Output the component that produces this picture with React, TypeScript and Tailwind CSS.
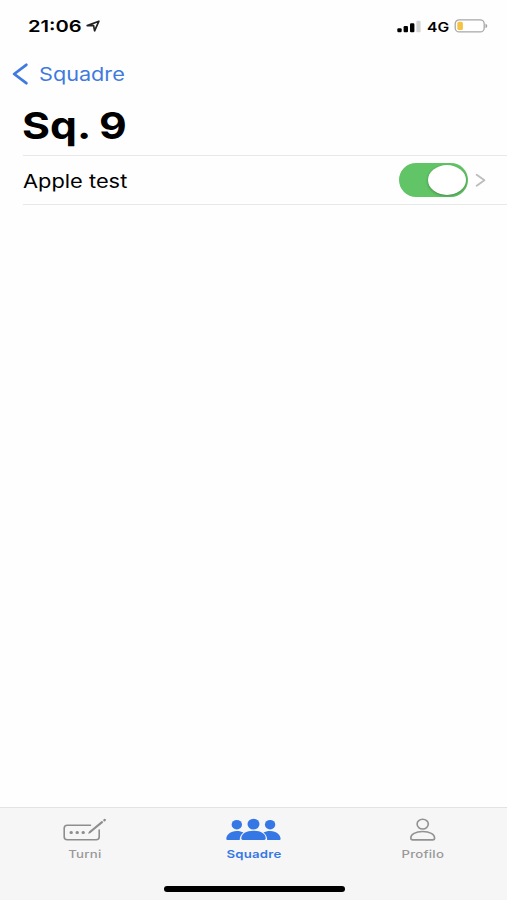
import React from "react";

function StatusBar() {
  return (
    <div className="flex h-[52px] items-center justify-between pl-[28px] pr-[19px]">
      <div className="flex items-center">
        <span className="block w-[58px] origin-left scale-x-[1.22] whitespace-nowrap text-[16.5px] font-semibold leading-5">
          21:06
        </span>
        <svg className="h-[12px] w-[14px]" viewBox="0 0 14 12" fill="none" stroke="#222" strokeWidth="1.7" strokeLinejoin="round">
          <path d="M1.2 5.6 12.9 1.2 8.6 10.8 7.6 5.7Z" />
        </svg>
      </div>
      <div className="flex items-center">
        <svg className="h-[13px] w-[24px]" viewBox="0 0 24 13" fill="#000">
          <rect x="0.3" y="8.3" width="4.4" height="4" rx="1.2" />
          <rect x="6.6" y="6.1" width="4.4" height="6.2" rx="1.1" />
          <rect x="13" y="3.3" width="4.4" height="9" rx="1.1" />
          <rect x="19.4" y="0.8" width="4.2" height="11.5" rx="1.1" fill="#d3d3d3" />
        </svg>
        <span className="ml-[6px] mt-px block w-[27px] origin-left scale-x-[1.16] whitespace-nowrap text-[13.5px] font-semibold leading-4">
          4G
        </span>
        <svg className="h-[14px] w-[34px]" viewBox="0 0 34 14">
          <rect x="1.2" y="0.9" width="29" height="12" rx="4" fill="#fff" stroke="#a7a7a7" strokeWidth="1.3" />
          <rect x="3.3" y="2.8" width="5.6" height="8.2" rx="1.6" fill="#f5c344" />
          <path d="M31.5 4.7c2.3.7 2.3 3.7 0 4.5Z" fill="#a0a0a0" />
        </svg>
      </div>
    </div>
  );
}

function Toggle() {
  return (
    <div className="flex h-[34px] w-[69px] items-center justify-end rounded-full bg-[#61c466] pr-[2px]">
      <div className="h-[30px] w-[38px] rounded-[50%] bg-white shadow-[0_1px_3px_rgba(0,0,0,0.3)]" />
    </div>
  );
}

function TabItem({ label, active, children }: { label: string; active?: boolean; children: React.ReactNode }) {
  return (
    <div className={`flex flex-1 flex-col items-center ${active ? "text-[#3577e5]" : "text-[#999999]"}`}>
      {children}
      <span className={`mt-[3px] scale-x-[1.2] text-[11px] leading-[14px] tracking-[0.2px] ${active ? "font-semibold" : "font-medium"}`}>
        {label}
      </span>
    </div>
  );
}

function TabBar() {
  return (
    <div className="flex h-[93px] flex-col justify-between border-t border-[#e2e2e2] bg-[#f6f6f6] pb-[8px] pt-[8px]">
      <div className="flex">
        <TabItem label="Turni">
          <svg className="h-[28px] w-[44px]" viewBox="0 0 44 28" fill="none" stroke="#8e8e8e" strokeWidth="1.6" strokeLinecap="round">
            <path d="M27.5 9.2H4.2Q1.2 9.2 1.2 12.2V20.8Q1.2 23.8 4.2 23.8H33.2Q36.2 23.8 36.2 20.8V14" />
            <path d="M27 16 39 6.2" strokeWidth="2.2" />
            <path d="M25.9 17 28.5 15" strokeWidth="1.3" />
            <path d="M41.4 4.2 41.8 3.9" strokeWidth="2.4" />
            <path d="M8 16.5h.4M14 16.5h.4M20 16.5h.4" strokeWidth="3" />
          </svg>
        </TabItem>
        <TabItem label="Squadre" active>
          <svg className="h-[28px] w-[56px]" viewBox="0.7 -0.4 56 28" fill="currentColor">
            <ellipse cx="11.5" cy="8.3" rx="5.2" ry="4.8" />
            <ellipse cx="44.8" cy="8.3" rx="5.2" ry="4.8" />
            <path d="M1 22.5C1 18.5 5 14.5 11.5 14.5c2.7 0 4.9.6 6.6 1.7-2.3 1.7-3.7 4.5-3.7 7.3H2.2Q1 23.5 1 22.5Z" />
            <path d="M55.3 22.5c0-4-4-8-10.5-8-2.7 0-4.9.6-6.6 1.7 2.3 1.7 3.7 4.5 3.7 7.3h12.2q1.2 0 1.2-1Z" />
            <ellipse cx="28.2" cy="7.7" rx="6" ry="5.4" />
            <path d="M16 22.2c0-4.8 4.8-7.8 12.2-7.8s12.2 3 12.2 7.8q0 1.3-1.5 1.3H17.5Q16 23.5 16 22.2Z" />
          </svg>
        </TabItem>
        <TabItem label="Profilo">
          <svg className="h-[28px] w-[28px]" viewBox="0.3 0 28 28" fill="none" stroke="#929292" strokeWidth="1.6">
            <ellipse cx="14" cy="8.1" rx="5.6" ry="4.9" />
            <path d="M2.1 22c0-3.7 4.8-6.5 11.9-6.5S25.9 18.3 25.9 22q0 1.9-2 1.9H4.1q-2 0-2-1.9Z" />
          </svg>
        </TabItem>
      </div>
      <div className="ml-[164px] h-[6px] w-[181px] rounded-full bg-black" />
    </div>
  );
}

export default function App() {
  return (
    <div className="flex h-[900px] w-[507px] flex-col overflow-hidden bg-[#fefefe] font-['Inter','Liberation_Sans',sans-serif] text-black">
      <StatusBar />
      <div className="flex h-[44px] items-center pl-[12px] text-[#3e7adf]">
        <svg className="h-[22px] w-[17px]" viewBox="0 0 17 22" fill="none" stroke="currentColor" strokeWidth="2.8" strokeLinecap="round" strokeLinejoin="round">
          <path d="M14.3 1.8 2.2 11l12.1 9.2" />
        </svg>
        <span className="ml-[10px] origin-left scale-x-[1.17] text-[18.5px] leading-6">Squadre</span>
      </div>
      <div className="flex h-[59px] items-center pl-[22px]">
        <h1 className="origin-left scale-x-[1.14] whitespace-nowrap text-[37.5px] font-bold leading-[44px] [word-spacing:-1px]">Sq. 9</h1>
      </div>
      <div className="ml-[23px] flex h-[50px] items-center border-y border-[#e8e8e8] pr-[21px]">
        <span className="mt-[2px] origin-left scale-x-[1.18] whitespace-nowrap text-[18.5px] leading-6">Apple test</span>
        <div className="ml-auto flex items-center">
          <Toggle />
          <svg className="ml-[7px] h-[14px] w-[11px]" viewBox="0 0 11 14" fill="none" stroke="#bdbdbd" strokeWidth="1.9" strokeLinecap="round" strokeLinejoin="round">
            <path d="M1.7 1.8 9.4 7.3 1.7 12.8" />
          </svg>
        </div>
      </div>
      <div className="flex-1" />
      <TabBar />
    </div>
  );
}
